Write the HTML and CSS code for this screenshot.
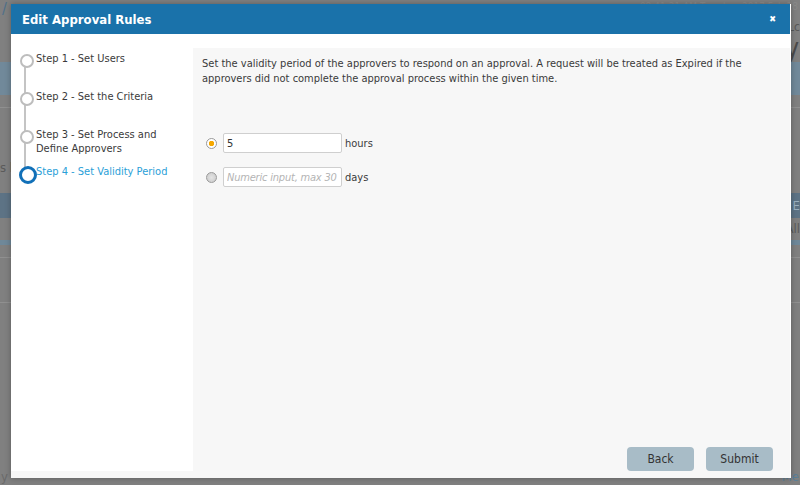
FILE: index.html
```html
<!DOCTYPE html>
<html lang="en">
<head>
  <meta charset="UTF-8">
  <title>Edit Approval Rules</title>
  <link rel="stylesheet" href="styles.css">
</head>
<body>
<div class="page">
  <div class="page-top">
    <span class="logo">/</span>
    <span class="clock">08:41:21 AM Tuesday, 2017 Feb 28</span>
  </div>
  <div class="page-title"><span>Lc</span><span class="big">y</span></div>
  <div class="band"><span>S</span></div>
  <div class="rule"></div>
  <div class="page-note">s b</div>
  <div class="band dark"><span></span><span>E</span></div>
  <div class="page-note right">All</div>
  <div class="thin"></div>
  <div class="rule"></div>
  <div class="rule low"></div>
  <div class="page-foot"><span>y</span><span class="link">Me</span></div>
</div>

<div class="modal">
  <div class="modal-header">
    <span class="title">Edit Approval Rules</span>
    <span class="close">&#x2716;</span>
  </div>
  <div class="modal-body">
    <ul class="steps">
      <li class="step">Step 1 - Set Users</li>
      <li class="step">Step 2 - Set the Criteria</li>
      <li class="step">Step 3 - Set Process and<br>Define Approvers</li>
      <li class="step active">Step 4 - Set Validity Period</li>
    </ul>
    <div class="panel">
      <p class="intro">Set the validity period of the approvers to respond on an approval. A request will be treated as Expired if the approvers did not complete the approval process within the given time.</p>
      <div class="options">
        <label class="option">
          <span class="radio checked"></span>
          <input class="field" type="text" value="5">
          <span class="unit">hours</span>
        </label>
        <label class="option">
          <span class="radio"></span>
          <input class="field" type="text" placeholder="Numeric input, max 30">
          <span class="unit">days</span>
        </label>
      </div>
      <div class="actions">
        <button class="btn">Back</button>
        <button class="btn">Submit</button>
      </div>
    </div>
  </div>
</div>
</body>
</html>
```

FILE: styles.css
```css
* {
  box-sizing: border-box;
}

body {
  margin: 0;
  background-color: #808080;
  font-family: "DejaVu Sans Condensed", "Liberation Sans Narrow", "Liberation Sans", sans-serif;
  font-size: 11px;
  color: #3a3a3a;
  overflow: hidden;
}

/* dimmed page behind the dialog */
.page {
  height: 485px;
  color: #6a6a6a;
}

.page-top {
  display: flex;
  justify-content: space-between;
  height: 18px;
  padding: 0 2px 0 2px;
}

.page-top .logo {
  color: #50708a;
  font-size: 16px;
  line-height: 18px;
}

.page-top .clock {
  color: #8a8a8a;
  font-size: 10px;
  line-height: 14px;
  white-space: nowrap;
}

.page-title {
  display: flex;
  justify-content: flex-end;
  align-items: flex-end;
  height: 44px;
  padding-right: 1px;
  color: #585858;
}

.page-title .big {
  font-size: 26px;
  line-height: 28px;
  color: #4a4a4a;
}

.page-title span:first-child {
  position: absolute;
  right: 0;
  top: 20px;
  font-size: 12px;
}

.band {
  height: 33px;
  background-color: #71899a;
  color: #8aa0b0;
  padding: 8px 0 0 16px;
  font-size: 13px;
}

.band.dark {
  margin-top: 15px;
  height: 25px;
  background-color: #5d7385;
  display: flex;
  justify-content: space-between;
  color: #9ab0c0;
  padding: 5px 0 0 0;
}

.rule {
  height: 1px;
  margin-top: 12px;
  background-color: #909090;
}

.rule.low {
  margin-top: 44px;
}

.page-note {
  padding: 52px 0 0 0;
  height: 70px;
  font-size: 13px;
  color: #5a5a5a;
}

.page-note.right {
  height: 22px;
  padding: 3px 0 0 0;
  text-align: right;
}

.thin {
  height: 5px;
  background-color: #6f8899;
}

.page-foot {
  display: flex;
  justify-content: space-between;
  margin-top: 166px;
  padding: 0 1px 0 1px;
  font-size: 13px;
  line-height: 16px;
  color: #6a6a6a;
}

.page-foot .link {
  color: #5a7f98;
}

/* dialog */
.modal {
  position: fixed;
  left: 11px;
  top: 4px;
  width: 780px;
  height: 474px;
  background-color: #f7f7f7;
  border-right: 1px solid #fff;
  box-shadow: 0 0 6px rgba(0, 0, 0, 0.3);
}

.modal-header {
  display: flex;
  justify-content: space-between;
  align-items: center;
  height: 30px;
  padding: 0 14px 0 11px;
  background-color: #1a72aa;
  color: #fff;
}

.modal-header .title {
  font-size: 13px;
  font-weight: bold;
}

.modal-header .close {
  font-size: 9px;
  font-weight: bold;
}

.modal-body {
  display: flex;
  height: 437px;
  background-color: #fff;
}

.steps {
  width: 182px;
  margin: 0;
  padding: 18px 0 0 9px;
  list-style: none;
  position: relative;
}

.steps::before {
  content: '';
  position: absolute;
  left: 13px;
  top: 26px;
  width: 2px;
  height: 112px;
  background-color: #c4c4c4;
}

.step {
  position: relative;
  padding-left: 16px;
  line-height: 14px;
  min-height: 38px;
}

.step:nth-child(3) {
  min-height: 37px;
}

.step::before {
  content: '';
  position: absolute;
  left: 0;
  top: 2px;
  width: 10px;
  height: 10px;
  border: 2px solid #bdbdbd;
  border-radius: 50%;
  background-color: #fff;
}

.step.active {
  color: #2aa0d8;
}

.step.active::before {
  left: -1px;
  top: 1px;
  width: 12px;
  height: 12px;
  border: 3px solid #1170b8;
}

.panel {
  flex: 1;
  display: flex;
  flex-direction: column;
  margin-top: 14px;
  padding: 8px 17px 0 9px;
  background-color: #f7f7f7;
}

.intro {
  margin: 0;
  line-height: 15px;
}

.options {
  display: flex;
  flex-direction: column;
  gap: 14px;
  padding: 47px 0 0 4px;
}

.option {
  display: flex;
  align-items: center;
}

.radio {
  width: 11px;
  height: 11px;
  margin-right: 6px;
  border: 1px solid #9a9a9a;
  border-radius: 50%;
  background: radial-gradient(circle, #e4e4e4 0, #c8c8c8 100%);
}

.radio.checked {
  background: radial-gradient(circle, #f6a800 0, #f6a800 2.5px, #fff 3px, #fff 100%);
}

.field {
  width: 119px;
  height: 20px;
  padding: 0 3px;
  border: 1px solid #cfcfcf;
  border-radius: 2px;
  background-color: #fff;
  font-family: inherit;
  font-size: 11px;
  color: #333;
}

.field::placeholder {
  color: #b4b4b4;
  font-style: italic;
  letter-spacing: -0.2px;
}

.unit {
  margin-left: 3px;
}

.actions {
  display: flex;
  justify-content: flex-end;
  gap: 12px;
  margin-top: auto;
}

.btn {
  width: 67px;
  height: 24px;
  border: 0;
  border-radius: 4px;
  background-color: #a8bcc7;
  font-family: inherit;
  font-size: 12px;
  color: #333;
}
```
